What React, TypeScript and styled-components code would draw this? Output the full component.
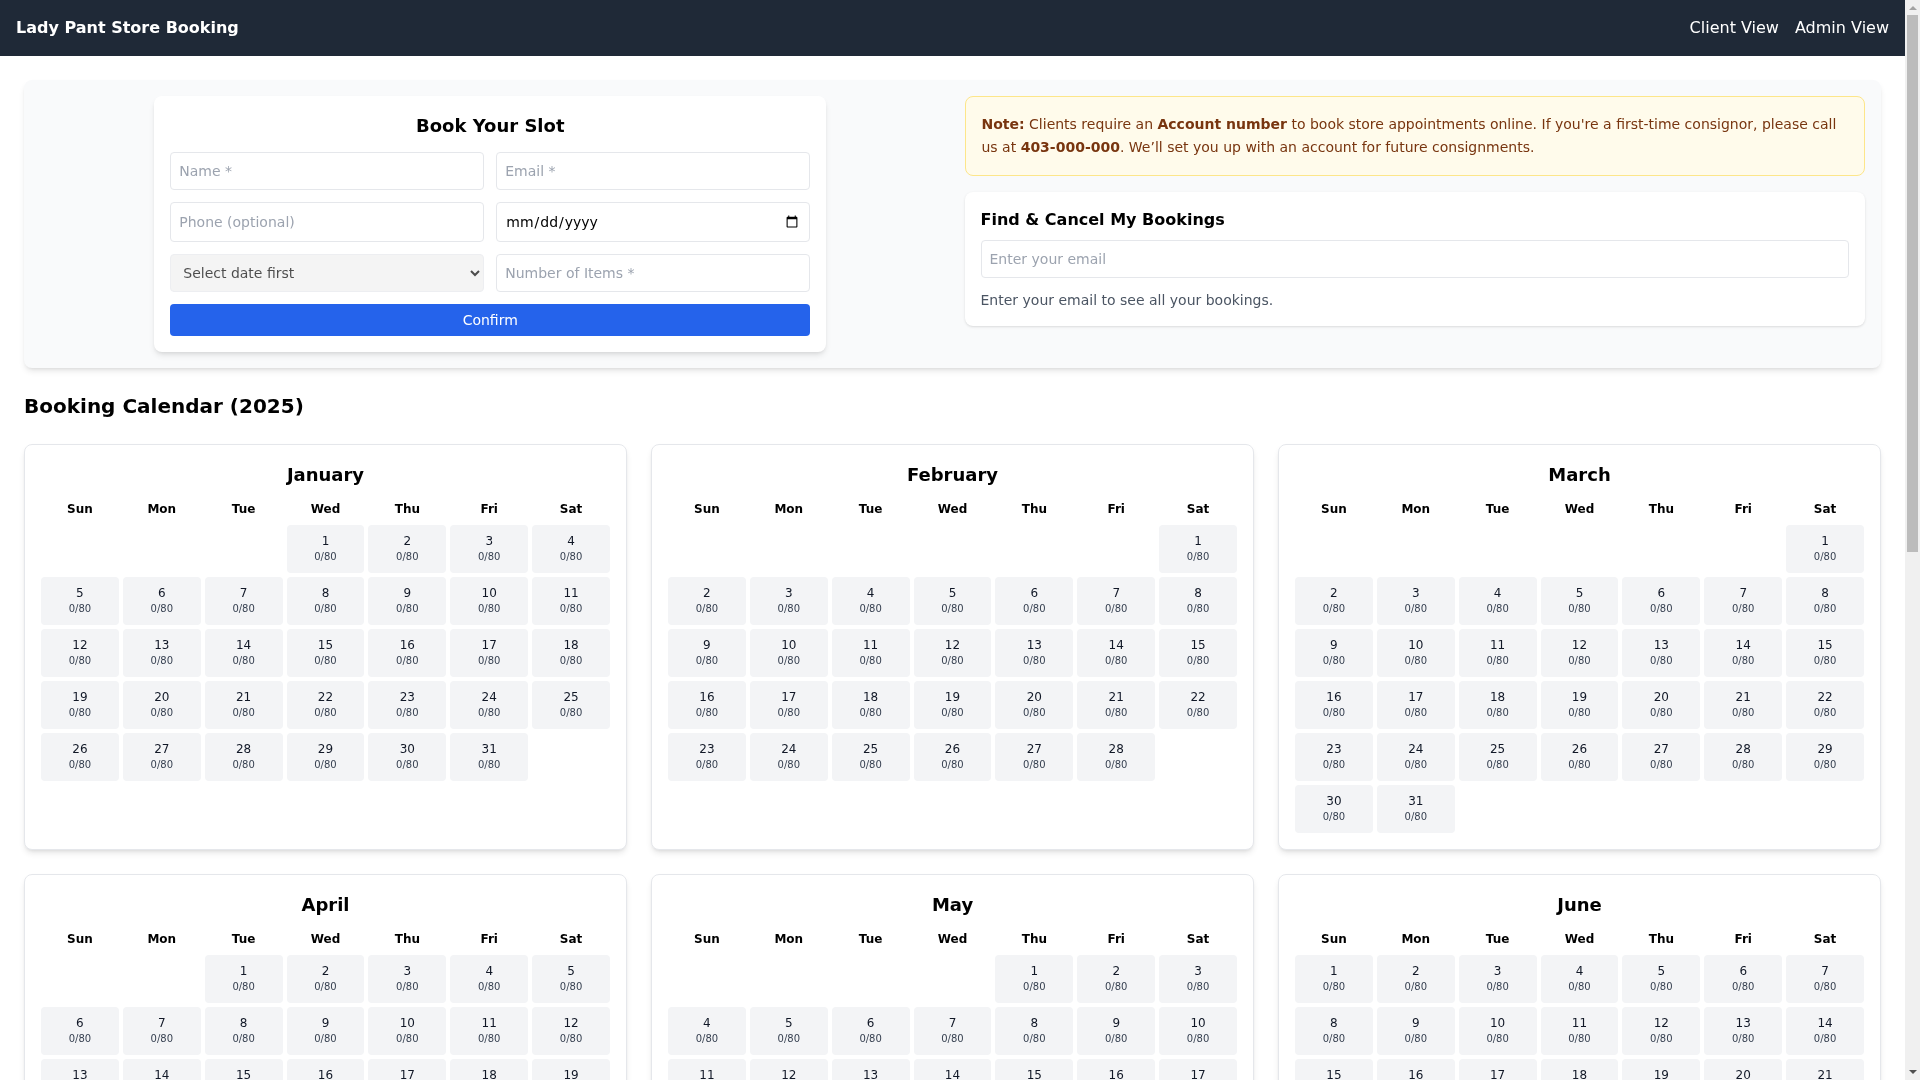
import styled, { createGlobalStyle } from "styled-components";

const GlobalStyle = createGlobalStyle`
    *, *::before, *::after {
        box-sizing: border-box;
    }

    html, body {
        margin: 0;
        padding: 0;
    }

    body {
        padding-right: 15px;
        font-family: "DejaVu Sans", sans-serif;
        line-height: 1.5;
        color: #000;
        background: #fff;
    }

    h1, h2, h3, p {
        margin: 0;
    }
`;

const ScrollTrack = styled.div`
    position: fixed;
    top: 0;
    right: 0;
    bottom: 0;
    width: 15px;
    padding: 0 2px;
    display: flex;
    flex-direction: column;
    align-items: center;
    background-color: #f0f0f0;
`;

const ScrollArrow = styled.div<{ $down?: boolean }>`
    flex: none;
    width: 0;
    height: 0;
    margin: ${(props) => (props.$down ? "auto 0 6px" : "6px 0 0")};
    border-left: 4px solid transparent;
    border-right: 4px solid transparent;
    border-top: ${(props) => (props.$down ? "4px solid #505050" : "none")};
    border-bottom: ${(props) => (props.$down ? "none" : "4px solid #a3a3a3")};
`;

const ScrollThumb = styled.div`
    flex: none;
    width: 100%;
    height: 537px;
    margin-top: 5px;
    background-color: #bcbcbc;
`;

const Page = styled.div`
    will-change: transform;
`;

const NavBar = styled.nav`
    height: 56px;
    padding: 0 16px;
    display: flex;
    align-items: center;
    justify-content: space-between;
    background-color: #1f2937;
    color: #fff;
`;

const Brand = styled.div`
    font-size: 16px;
    font-weight: 700;
`;

const NavLinks = styled.div`
    display: flex;
    gap: 16px;
`;

const NavLink = styled.a`
    font-size: 16px;
    color: #fff;
    cursor: pointer;
`;

const Main = styled.main`
    padding: 24px;
`;

const TopPanel = styled.section`
    display: grid;
    grid-template-columns: 1fr 1fr;
    gap: 24px;
    padding: 16px;
    margin-bottom: 24px;
    background-color: #f9fafb;
    border-radius: 8px;
    box-shadow: 0 4px 6px -1px rgba(0, 0, 0, 0.1), 0 2px 4px -2px rgba(0, 0, 0, 0.1);
`;

const FormCol = styled.div`
    display: flex;
    justify-content: center;
    align-items: flex-start;
`;

const FormCard = styled.form`
    width: 100%;
    max-width: 672px;
    padding: 16px;
    background-color: #fff;
    border-radius: 8px;
    box-shadow: 0 4px 6px -1px rgba(0, 0, 0, 0.1), 0 2px 4px -2px rgba(0, 0, 0, 0.1);
`;

const FormTitle = styled.h2`
    font-size: 18px;
    line-height: 28px;
    font-weight: 700;
    text-align: center;
    margin-bottom: 12px;
`;

const FieldGrid = styled.div`
    display: grid;
    grid-template-columns: 1fr 1fr;
    gap: 12px;
    margin-bottom: 12px;
`;

const Field = styled.input`
    width: 100%;
    padding: 8px;
    font-family: inherit;
    font-size: 14px;
    line-height: 20px;
    color: #000;
    background: #fff;
    border: 1px solid #e5e7eb;
    border-radius: 4px;
    outline: none;

    &::placeholder {
        color: #9ca3af;
        opacity: 1;
    }
`;

const SlotSelect = styled.select`
    width: 100%;
    padding: 8px;
    font-family: inherit;
    font-size: 14px;
    line-height: 20px;
    color: #000;
    background-color: #efefef;
    border: 1px solid #e5e7eb;
    border-radius: 4px;
    outline: none;
`;

const ConfirmButton = styled.button`
    display: block;
    width: 100%;
    padding: 4px 8px;
    font-family: inherit;
    font-size: 14px;
    line-height: 24px;
    color: #fff;
    background-color: #2563eb;
    border: none;
    border-radius: 4px;
`;

const SideCol = styled.div`
    display: flex;
    flex-direction: column;
    gap: 16px;
`;

const Notice = styled.div`
    padding: 16px;
    font-size: 14px;
    line-height: 22.75px;
    color: #78350f;
    background-color: #fffbeb;
    border: 1px solid #fde68a;
    border-radius: 8px;

    strong {
        font-weight: 700;
    }
`;

const LookupCard = styled.div`
    padding: 16px;
    background-color: #fff;
    border-radius: 8px;
    box-shadow: 0 1px 3px 0 rgba(0, 0, 0, 0.1), 0 1px 2px -1px rgba(0, 0, 0, 0.1);
`;

const LookupTitle = styled.h2`
    font-size: 16px;
    line-height: 24px;
    font-weight: 700;
    margin-bottom: 8px;
`;

const LookupHint = styled.p`
    margin-top: 12px;
    font-size: 14px;
    line-height: 20px;
    color: #4b5563;
`;

const CalendarTitle = styled.h1`
    font-size: 20px;
    line-height: 28px;
    font-weight: 700;
    margin-bottom: 24px;
`;

const MonthGrid = styled.div`
    display: grid;
    grid-template-columns: repeat(3, 1fr);
    gap: 24px;
`;

const MonthCard = styled.div`
    padding: 16px;
    background-color: #fff;
    border: 1px solid #e5e7eb;
    border-radius: 8px;
    box-shadow: 0 4px 6px -1px rgba(0, 0, 0, 0.1), 0 2px 4px -2px rgba(0, 0, 0, 0.1);
`;

const MonthName = styled.h3`
    font-size: 18px;
    line-height: 28px;
    font-weight: 700;
    text-align: center;
    margin-bottom: 8px;
`;

const DayGrid = styled.div`
    display: grid;
    grid-template-columns: repeat(7, 1fr);
    gap: 4px;
`;

const Weekday = styled.div`
    padding: 4px;
    font-size: 12px;
    line-height: 16px;
    font-weight: 700;
    text-align: center;
`;

const DayCell = styled.div`
    height: 48px;
    padding-top: 8px;
    text-align: center;
    background-color: #f3f4f6;
    border-radius: 4px;
`;

const EmptyCell = styled.div`
    height: 48px;
`;

const DayNumber = styled.div`
    font-size: 12px;
    line-height: 16px;
    color: #111827;
`;

const DayCount = styled.div`
    font-size: 10px;
    line-height: 15px;
    color: #374151;
`;

const WEEKDAYS = ["Sun", "Mon", "Tue", "Wed", "Thu", "Fri", "Sat"];
const MONTHS = [
    "January", "February", "March", "April", "May", "June",
    "July", "August", "September", "October", "November", "December",
];

function Month({ index }: { index: number }) {
    const blanks = new Date(2025, index, 1).getDay();
    const total = new Date(2025, index + 1, 0).getDate();

    return (
        <MonthCard>
            <MonthName>{MONTHS[index]}</MonthName>
            <DayGrid>
                {WEEKDAYS.map((d) => (
                    <Weekday key={d}>{d}</Weekday>
                ))}
                {Array.from({ length: blanks }, (_, i) => (
                    <EmptyCell key={i} />
                ))}
                {Array.from({ length: total }, (_, i) => (
                    <DayCell key={i}>
                        <DayNumber>{i + 1}</DayNumber>
                        <DayCount>0/80</DayCount>
                    </DayCell>
                ))}
            </DayGrid>
        </MonthCard>
    );
}

function App() {
    return (
        <>
            <GlobalStyle />
            <ScrollTrack>
                <ScrollArrow />
                <ScrollThumb />
                <ScrollArrow $down />
            </ScrollTrack>
            <Page>
                <NavBar>
                    <Brand>Lady Pant Store Booking</Brand>
                    <NavLinks>
                        <NavLink>Client View</NavLink>
                        <NavLink>Admin View</NavLink>
                    </NavLinks>
                </NavBar>
                <Main>
                    <TopPanel>
                        <FormCol>
                            <FormCard>
                                <FormTitle>Book Your Slot</FormTitle>
                                <FieldGrid>
                                    <Field placeholder="Name *" />
                                    <Field type="email" placeholder="Email *" />
                                    <Field placeholder="Phone (optional)" />
                                    <Field type="date" />
                                    <SlotSelect disabled>
                                        <option>Select date first</option>
                                    </SlotSelect>
                                    <Field type="number" placeholder="Number of Items *" />
                                </FieldGrid>
                                <ConfirmButton type="button">Confirm</ConfirmButton>
                            </FormCard>
                        </FormCol>
                        <SideCol>
                            <Notice>
                                <strong>Note:</strong> Clients require an <strong>Account number</strong> to book store appointments online. If you're a first-time consignor, please call us at <strong>403-000-000</strong>. We’ll set you up with an account for future consignments.
                            </Notice>
                            <LookupCard>
                                <LookupTitle>Find &amp; Cancel My Bookings</LookupTitle>
                                <Field type="email" placeholder="Enter your email" />
                                <LookupHint>Enter your email to see all your bookings.</LookupHint>
                            </LookupCard>
                        </SideCol>
                    </TopPanel>
                    <CalendarTitle>Booking Calendar (2025)</CalendarTitle>
                    <MonthGrid>
                        {MONTHS.map((m, i) => (
                            <Month key={m} index={i} />
                        ))}
                    </MonthGrid>
                </Main>
            </Page>
        </>
    );
}

export default App;
